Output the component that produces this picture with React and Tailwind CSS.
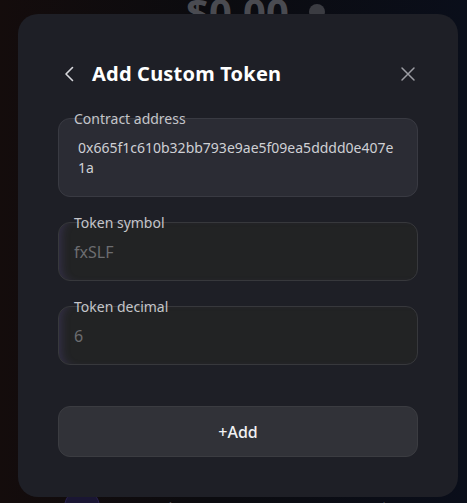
import React from "react";

const font = { fontFamily: '"Noto Sans", "Open Sans", sans-serif' };

const Field = ({ label, children, className }) => (
  <div className={`relative rounded-[12px] border ${className}`}>
    <span className="absolute -top-[10px] left-[15px] text-[14px] leading-[20px] text-[#c4c5ca]">
      {label}
    </span>
    {children}
  </div>
);

export default function App() {
  return (
    <div
      className="relative w-[467px] h-[503px] overflow-hidden bg-[linear-gradient(90deg,#140c0c_0%,#0b0b0f_45%,#0a0e1a_100%)]"
      style={font}
    >
      {/* content behind the dialog */}
      <div className="absolute left-[186px] -top-[18px] flex items-center gap-5 text-[40px] font-bold text-[#4a4b51]">
        <span>$0.00</span>
        <span className="w-[16px] h-[16px] rounded-full bg-[#3b3c42]" />
      </div>
      <div className="absolute left-[64px] top-[489px] flex w-[354px] items-center">
        <span className="w-[36px] h-[36px] rounded-full bg-[#1a1633] border border-[#2a2250]" />
        <span className="ml-[16px] text-[15px] text-[#505157]">USD Coin</span>
        <span className="ml-auto text-[15px] text-[#505157]">$0.00</span>
      </div>

      {/* dialog */}
      <div className="absolute left-[18px] top-[14px] w-[440px] h-[483px] rounded-[20px] bg-[#1e1f26] px-[40px] pt-[46px] pb-[40px] flex flex-col">
        <div className="flex h-[28px] items-center">
          <svg width="12" height="16" viewBox="0 0 12 16" className="ml-[5px]">
            <path d="M9.5 1.5 L3 8 L9.5 14.5" fill="none" stroke="#d8d8dc" strokeWidth="1.6" strokeLinecap="round" strokeLinejoin="round" />
          </svg>
          <h1 className="ml-[17px] text-[20px] tracking-[0.2px] font-bold text-white leading-[28px]">Add Custom Token</h1>
          <svg width="16" height="16" viewBox="0 0 16 16" className="ml-auto mr-[2px]">
            <path d="M2 2 L14 14 M14 2 L2 14" fill="none" stroke="#9c9da3" strokeWidth="1.5" strokeLinecap="round" />
          </svg>
        </div>

        <Field label="Contract address" className="mt-[30px] h-[79px] bg-[#2b2c34] border-[#393a42]">
          <div className="pl-[19px] pr-[20px] pt-[19px] text-[14px] leading-[20px] text-[#cfd0d4] break-all">
            0x665f1c610b32bb793e9ae5f09ea5dddd0e407e1a
          </div>
        </Field>

        <Field label="Token symbol" className="mt-[25px] h-[59px] bg-[#222324] border-[#37383c] shadow-[inset_8px_0_10px_-6px_rgba(110,90,190,0.25)] flex items-center">
          <span className="pl-[15px] text-[16px] text-[#6c6d70]">fxSLF</span>
        </Field>

        <Field label="Token decimal" className="mt-[25px] h-[59px] bg-[#222324] border-[#37383c] shadow-[inset_8px_0_10px_-6px_rgba(110,90,190,0.25)] flex items-center">
          <span className="pl-[15px] text-[16px] text-[#6c6d70]">6</span>
        </Field>

        <button className="mt-[41px] h-[51px] w-full rounded-[12px] bg-[#313238] border border-[#3b3c41] text-[16px] font-medium text-[#f2f2f4]">
          +Add
        </button>
      </div>
    </div>
  );
}
